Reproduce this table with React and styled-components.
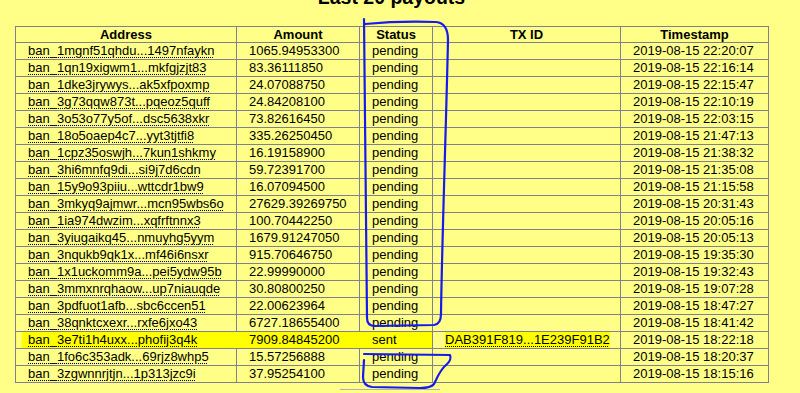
import styled, { createGlobalStyle } from "styled-components"

const GlobalStyle = createGlobalStyle`
  html, body {
    margin: 0;
    padding: 0;
    background: #ffff88;
    overflow: hidden;
  }
  body {
    font-family: "Liberation Sans", Arial, sans-serif;
    color: #000;
  }
`

const Page = styled.div`
  position: relative;
  width: 800px;
  height: 393px;
  padding-left: 15px;
  box-sizing: border-box;
`

const Column = styled.div`
  width: 753px;
  display: flex;
  flex-direction: column;
`

const Title = styled.h2`
  margin: -14px 0 18px 0;
  font-size: 19.5px;
  line-height: 22px;
  font-weight: bold;
  text-align: center;
`

const Table = styled.table`
  border-collapse: collapse;
  table-layout: fixed;
  width: 753px;
  font-size: 13px;
  border: 1px solid #808090;
`

const Head = styled.th`
  border: 1px solid #808090;
  height: 15px;
  line-height: 15px;
  padding: 0;
  font-weight: bold;
  text-align: center;
`

const Cell = styled.td`
  border: 1px solid #808090;
  height: 16px;
  line-height: 16px;
  padding: 0 0 0 12px;
  white-space: nowrap;
  overflow: hidden;
  background: ${p => p.$marked ? "#ffff00" : "transparent"};
  ${p => p.$first && p.$marked && `
    background: linear-gradient(to right, #ffff88 5px, #ffff00 5px);
  `}
  ${p => p.$marked && p.$joinRight && `border-right-color: #ffff00;`}
`

const Abbr = styled.span`
  text-decoration: underline dotted #000;
  text-underline-offset: 2px;
  text-decoration-thickness: 1px;
`

const TxMark = styled(Abbr)`
  background: #ffff00;
  padding: 1px 0;
`

const Rule = styled.div`
  width: 100px;
  margin: 6px 0 0 325px;
  border-top: 1px solid #b0b0b0;
`

const Scribble = styled.svg`
  position: absolute;
  left: 0;
  top: 0;
  pointer-events: none;
`

const payouts = [
  ["ban_1mgnf51qhdu...1497nfaykn", "1065.94953300", "pending", "", "2019-08-15 22:20:07"],
  ["ban_1qn19xigwm1...mkfgjzjt83", "83.36111850", "pending", "", "2019-08-15 22:16:14"],
  ["ban_1dke3jrywys...ak5xfpoxmp", "24.07088750", "pending", "", "2019-08-15 22:15:47"],
  ["ban_3g73qqw873t...pqeoz5quff", "24.84208100", "pending", "", "2019-08-15 22:10:19"],
  ["ban_3o53o77y5of...dsc5638xkr", "73.82616450", "pending", "", "2019-08-15 22:03:15"],
  ["ban_18o5oaep4c7...yyt3tjtfi8", "335.26250450", "pending", "", "2019-08-15 21:47:13"],
  ["ban_1cpz35oswjh...7kun1shkmy", "16.19158900", "pending", "", "2019-08-15 21:38:32"],
  ["ban_3hi6mnfq9di...si9j7d6cdn", "59.72391700", "pending", "", "2019-08-15 21:35:08"],
  ["ban_15y9o93piiu...wttcdr1bw9", "16.07094500", "pending", "", "2019-08-15 21:15:58"],
  ["ban_3mkyq9ajmwr...mcn95wbs6o", "27629.39269750", "pending", "", "2019-08-15 20:31:43"],
  ["ban_1ia974dwzim...xqfrftnnx3", "100.70442250", "pending", "", "2019-08-15 20:05:16"],
  ["ban_3yiugaikq45...nmuyhg5yym", "1679.91247050", "pending", "", "2019-08-15 20:05:13"],
  ["ban_3nqukb9qk1x...mf46i6nsxr", "915.70646750", "pending", "", "2019-08-15 19:35:30"],
  ["ban_1x1uckomm9a...pei5ydw95b", "22.99990000", "pending", "", "2019-08-15 19:32:43"],
  ["ban_3mmxnrqhaow...up7niauqde", "30.80800250", "pending", "", "2019-08-15 19:07:28"],
  ["ban_3pdfuot1afb...sbc6ccen51", "22.00623964", "pending", "", "2019-08-15 18:47:27"],
  ["ban_38qnktcxexr...rxfe6jxo43", "6727.18655400", "pending", "", "2019-08-15 18:41:42"],
  ["ban_3e7ti1h4uxx...phofij3q4k", "7909.84845200", "sent", "DAB391F819...1E239F91B2", "2019-08-15 18:22:18"],
  ["ban_1fo6c353adk...69rjz8whp5", "15.57256888", "pending", "", "2019-08-15 18:20:37"],
  ["ban_3zgwnnrjtjn...1p313jzc9i", "37.95254100", "pending", "", "2019-08-15 18:15:16"],
]

function PayoutRow({row}){
  const [address, amount, status, tx, time] = row
  const marked = status === "sent"
  return (
    <tr>
      <Cell $first $marked={marked} $joinRight><Abbr>{address}</Abbr></Cell>
      <Cell $marked={marked} $joinRight>{amount}</Cell>
      <Cell $marked={marked}>{status}</Cell>
      <Cell>{tx && <TxMark>{tx}</TxMark>}</Cell>
      <Cell>{time}</Cell>
    </tr>
  )
}

function App(){
  return (
    <Page>
      <GlobalStyle />
      <Column>
        <Title>Last 20 payouts</Title>
        <Table>
          <colgroup>
            <col style={{width: 221}} />
            <col style={{width: 123}} />
            <col style={{width: 73}} />
            <col style={{width: 188}} />
            <col style={{width: 148}} />
          </colgroup>
          <thead>
            <tr>
              <Head>Address</Head>
              <Head>Amount</Head>
              <Head>Status</Head>
              <Head>TX ID</Head>
              <Head>Timestamp</Head>
            </tr>
          </thead>
          <tbody>
            {payouts.map(row => <PayoutRow key={row[0]} row={row} />)}
          </tbody>
        </Table>
        <Rule />
      </Column>
      <Scribble width="800" height="393" viewBox="0 0 800 393">
        <path
          d="M364 19 C364 80 366 200 367 318 Q367 326 375 326 L434 325 Q441 324 441 314 C442 240 446 130 448 40 Q448 23 436 22 C410 21 386 22 365 24"
          fill="none" stroke="#1818f0" strokeWidth="2.2" strokeLinecap="round" strokeLinejoin="round"
        />
        <path
          d="M364 354 L450 355 Q452 360 446 365 C440 370 437 378 434 384 Q431 388 420 388 L372 387 Q363 386 363 377 L364 360"
          fill="none" stroke="#1818f0" strokeWidth="2.2" strokeLinecap="round" strokeLinejoin="round"
        />
      </Scribble>
    </Page>
  )
}

export default App
